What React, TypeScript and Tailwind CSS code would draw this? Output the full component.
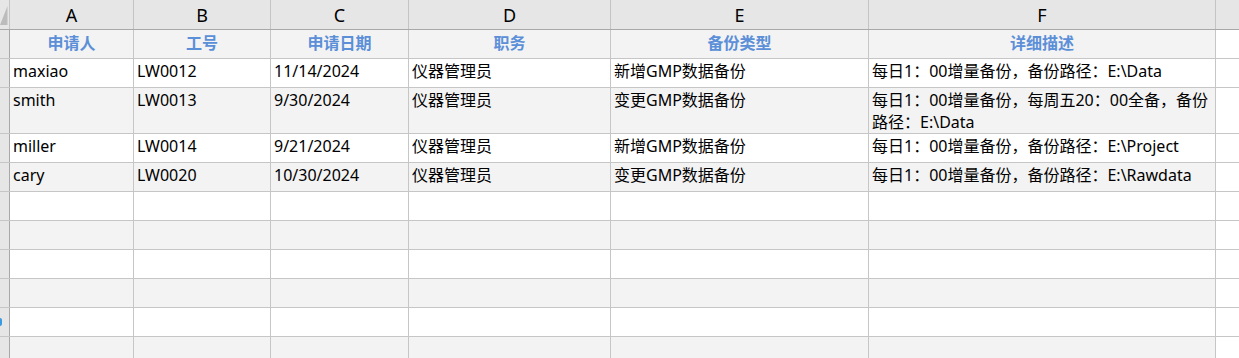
import React from "react";

const COLS = ["A", "B", "C", "D", "E", "F"];
const WIDTHS = ["w-[124px]", "w-[137px]", "w-[138px]", "w-[202px]", "w-[258px]", "w-[347px]"];

const HEADERS = ["申请人", "工号", "申请日期", "职务", "备份类型", "详细描述"];

type Row = { cells: React.ReactNode[]; h: string };

const DATA: Row[] = [
  { cells: ["maxiao", "LW0012", "11/14/2024", "仪器管理员", "新增GMP数据备份", "每日1：00增量备份，备份路径：E:\\Data"], h: "h-[29px]" },
  {
    cells: [
      "smith",
      "LW0013",
      "9/30/2024",
      "仪器管理员",
      "变更GMP数据备份",
      <>
        每日1：00增量备份，每周五20：00全备，备份
        <br />
        路径：E:\Data
      </>,
    ],
    h: "h-[46px]",
  },
  { cells: ["miller", "LW0014", "9/21/2024", "仪器管理员", "新增GMP数据备份", "每日1：00增量备份，备份路径：E:\\Project"], h: "h-[29px]" },
  { cells: ["cary", "LW0020", "10/30/2024", "仪器管理员", "变更GMP数据备份", "每日1：00增量备份，备份路径：E:\\Rawdata"], h: "h-[29px]" },
];

const FONT = { fontFamily: '"Noto Sans", "Noto Sans CJK SC", sans-serif' };

function RowHeader() {
  return <div className="w-[10px] shrink-0 bg-[#e6e6e6] border-r border-[#a8a8a8]" />;
}

export default function App() {
  const emptyRows = 6;
  return (
    <div className="relative w-[1239px] h-[358px] overflow-hidden bg-white text-black" style={FONT}>
      {/* column letters */}
      <div className="flex h-[30px] bg-[#e6e6e6] border-b border-[#a8a8a8]">
        <div className="relative w-[10px] shrink-0 border-r border-[#c4c4c4]">
          <svg className="absolute left-0 top-0" width="9" height="29" viewBox="0 0 9 29">
            <polygon points="7.5,6 7.5,25 0,25" fill="#bcbcbc" />
          </svg>
        </div>
        {COLS.map((c, i) => (
          <div
            key={c}
            className={`${WIDTHS[i]} shrink-0 border-r border-[#c4c4c4] flex items-center justify-center text-[18px] leading-none pt-[1px]`}
          >
            {c}
          </div>
        ))}
        <div className="flex-1" />
      </div>

      {/* header row */}
      <div className="flex h-[29px] border-b border-[#c6c6c6]">
        <RowHeader />
        {HEADERS.map((h, i) => (
          <div
            key={h}
            className={`${WIDTHS[i]} shrink-0 bg-[#f3f3f3] border-r border-[#c6c6c6] text-center font-bold text-[#5b8fd8] text-[16px] leading-[27px]`}
          >
            {h}
          </div>
        ))}
        <div className="flex-1" />
      </div>

      {/* data rows */}
      {DATA.map((r, ri) => (
        <div key={ri} className={`flex ${r.h} border-b border-[#c6c6c6]`}>
          <RowHeader />
          {r.cells.map((c, i) => (
            <div
              key={i}
              className={`${WIDTHS[i]} shrink-0 border-r border-[#c6c6c6] ${ri % 2 === 1 ? "bg-[#f3f3f3]" : "bg-white"} px-[3px] text-[16px] leading-[22px] pt-[1px] whitespace-nowrap overflow-hidden`}
            >
              {c}
            </div>
          ))}
          <div className="flex-1" />
        </div>
      ))}

      {/* empty rows */}
      {Array.from({ length: emptyRows }).map((_, ri) => (
        <div key={`e${ri}`} className="flex h-[29px] border-b border-[#c6c6c6]">
          <RowHeader />
          {WIDTHS.map((w, i) => (
            <div
              key={i}
              className={`${w} shrink-0 border-r border-[#c6c6c6] ${ri % 2 === 1 ? "bg-[#f3f3f3]" : "bg-white"}`}
            />
          ))}
          <div className="flex-1" />
        </div>
      ))}

      <div className="absolute left-0 top-[318px] w-[2px] h-[8px] bg-[#3b9be0] rounded-r-sm" />
    </div>
  );
}
